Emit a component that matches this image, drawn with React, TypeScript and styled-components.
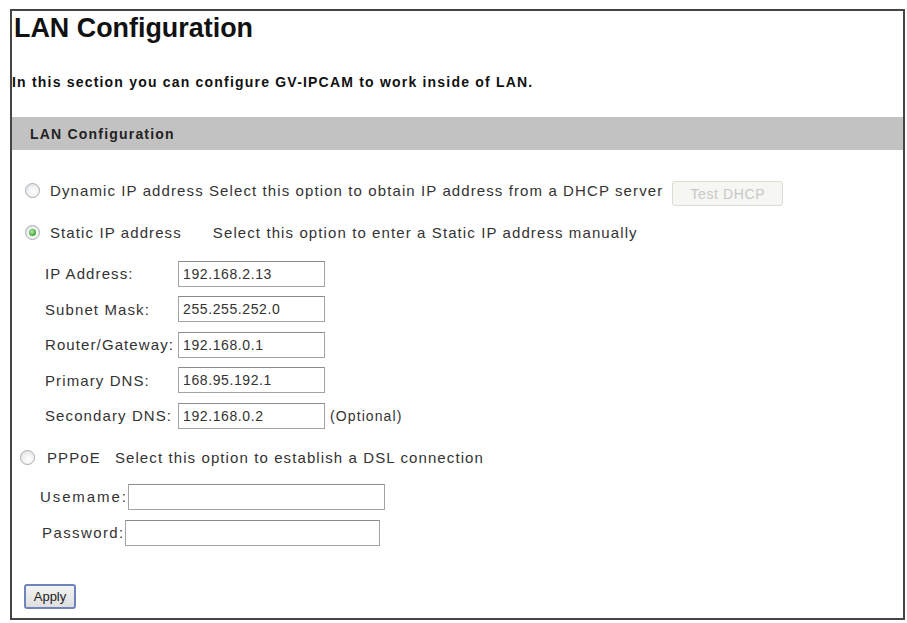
import React from "react"
import styled, { createGlobalStyle } from "styled-components"

const GlobalStyle = createGlobalStyle`
  html, body {
    margin: 0;
    padding: 0;
    background: #fff;
  }
  body {
    font-family: "Liberation Sans", Arial, sans-serif;
    color: #333;
  }
`

const Frame = styled.div`
  box-sizing: border-box;
  margin: 9px 0 0 10px;
  width: 895px;
  height: 611px;
  border: 2px solid #454545;
  display: flex;
  flex-direction: column;
`

const Title = styled.h1`
  margin: 0;
  padding: 2px 0 0 2px;
  font-size: 26.9px;
  line-height: 30px;
  font-weight: bold;
  color: #111;
`

const Intro = styled.p`
  margin: 31px 0 0 0;
  font-size: 14px;
  line-height: 16px;
  font-weight: bold;
  letter-spacing: 1.2px;
  color: #111;
`

const SectionBar = styled.div`
  margin-top: 27px;
  height: 33px;
  background: #c2c2c2;
  display: flex;
  align-items: center;
  padding-left: 18px;
  font-size: 14px;
  font-weight: bold;
  letter-spacing: 1.2px;
  color: #222;
`

const OptionRow = styled.div<{ $top: number; $indent: number }>`
  margin-top: ${p => p.$top}px;
  margin-left: ${p => p.$indent}px;
  height: 26px;
  display: flex;
  align-items: center;
  font-size: 15px;
  letter-spacing: 1.1px;
  white-space: nowrap;
`

const Radio = styled.span<{ $checked?: boolean }>`
  box-sizing: border-box;
  width: 15px;
  height: 15px;
  border-radius: 50%;
  border: 1px solid #a7adb2;
  background: radial-gradient(circle at 60% 65%, #ffffff 0%, #f2f2f2 45%, #d9dcdf 100%);
  display: inline-flex;
  align-items: center;
  justify-content: center;
  flex: none;

  &::after {
    content: "";
    display: ${p => (p.$checked ? "block" : "none")};
    width: 7px;
    height: 7px;
    border-radius: 50%;
    background: radial-gradient(circle at 40% 40%, #b8f0b0 0%, #4fb244 55%, #2d8a2d 100%);
  }
`

const OptionText = styled.span<{ $gap: number }>`
  margin-left: ${p => p.$gap}px;
`

const Spacer = styled.span<{ $w: number }>`
  display: inline-block;
  width: ${p => p.$w}px;
`

const GhostButton = styled.button`
  margin-left: 9px;
  margin-top: 7px;
  width: 111px;
  height: 25px;
  border: 1px solid #dcdcd4;
  border-radius: 3px;
  background: #f6f6f2;
  color: #c8c8c8;
  font-family: "Liberation Sans", Arial, sans-serif;
  font-size: 14px;
  letter-spacing: 0.6px;
  padding: 0;
`

const FieldGrid = styled.div`
  margin: 15px 0 0 33px;
  display: grid;
  grid-template-columns: 133px 147px auto;
  grid-auto-rows: 27px;
  row-gap: 8.5px;
  align-items: center;
  font-size: 15px;
  letter-spacing: 1.1px;
`

const FieldLabel = styled.label<{ $spacing?: number }>`
  white-space: nowrap;
  letter-spacing: ${p => (p.$spacing ? `${p.$spacing}px` : "inherit")};
`

const TextInput = styled.input<{ $w?: number }>`
  box-sizing: border-box;
  width: ${p => (p.$w ? `${p.$w}px` : "100%")};
  height: 26px;
  border: 1px solid #a4a4a4;
  border-top-color: #8c8c8c;
  background: #fff;
  padding: 0 4px;
  font-family: "Liberation Sans", Arial, sans-serif;
  font-size: 14px;
  letter-spacing: 0.6px;
  color: #333;
  outline: none;
`

const Note = styled.span`
  margin-left: 5px;
  font-size: 14px;
`

const InlineField = styled.div<{ $top: number; $indent: number }>`
  margin: ${p => p.$top}px 0 0 ${p => p.$indent}px;
  display: flex;
  align-items: center;
  font-size: 15px;
  letter-spacing: 1.1px;
`

const ApplyButton = styled.button`
  margin: 38px 0 0 12px;
  width: 52px;
  height: 25px;
  border: 2px solid #6f83bd;
  border-radius: 3px;
  background: linear-gradient(#f4f4f4, #dedede);
  font-family: "Liberation Sans", Arial, sans-serif;
  font-size: 13px;
  color: #222;
  padding: 0;
`

const staticFields = [
  { label: "IP Address:", value: "192.168.2.13" },
  { label: "Subnet Mask:", value: "255.255.252.0" },
  { label: "Router/Gateway:", value: "192.168.0.1" },
  { label: "Primary DNS:", value: "168.95.192.1" },
  { label: "Secondary DNS:", value: "192.168.0.2", note: "(Optional)" },
]

export default function App() {
  return (
    <>
      <GlobalStyle />
      <Frame>
        <Title>LAN Configuration</Title>
        <Intro>In this section you can configure GV-IPCAM to work inside of LAN.</Intro>
        <SectionBar>LAN Configuration</SectionBar>

        <OptionRow $top={27} $indent={13}>
          <Radio />
          <OptionText $gap={10}>
            Dynamic IP address Select this option to obtain IP address from a DHCP server
          </OptionText>
          <GhostButton disabled>Test DHCP</GhostButton>
        </OptionRow>

        <OptionRow $top={16} $indent={13}>
          <Radio $checked />
          <OptionText $gap={10}>Static IP address</OptionText>
          <Spacer $w={31} />
          <span>Select this option to enter a Static IP address manually</span>
        </OptionRow>

        <FieldGrid>
          {staticFields.map(f => (
            <React.Fragment key={f.label}>
              <FieldLabel>{f.label}</FieldLabel>
              <TextInput defaultValue={f.value} />
              {f.note ? <Note>{f.note}</Note> : <span />}
            </React.Fragment>
          ))}
        </FieldGrid>

        <OptionRow $top={15.5} $indent={8}>
          <Radio />
          <OptionText $gap={12}>PPPoE</OptionText>
          <Spacer $w={14} />
          <span>Select this option to establish a DSL connection</span>
        </OptionRow>

        <InlineField $top={13} $indent={28}>
          <FieldLabel $spacing={1.9}>Usemame:</FieldLabel>
          <TextInput $w={257} />
        </InlineField>
        <InlineField $top={10} $indent={30}>
          <FieldLabel $spacing={1.4}>Password:</FieldLabel>
          <TextInput $w={255} type="password" />
        </InlineField>

        <div>
          <ApplyButton>Apply</ApplyButton>
        </div>
      </Frame>
    </>
  )
}
